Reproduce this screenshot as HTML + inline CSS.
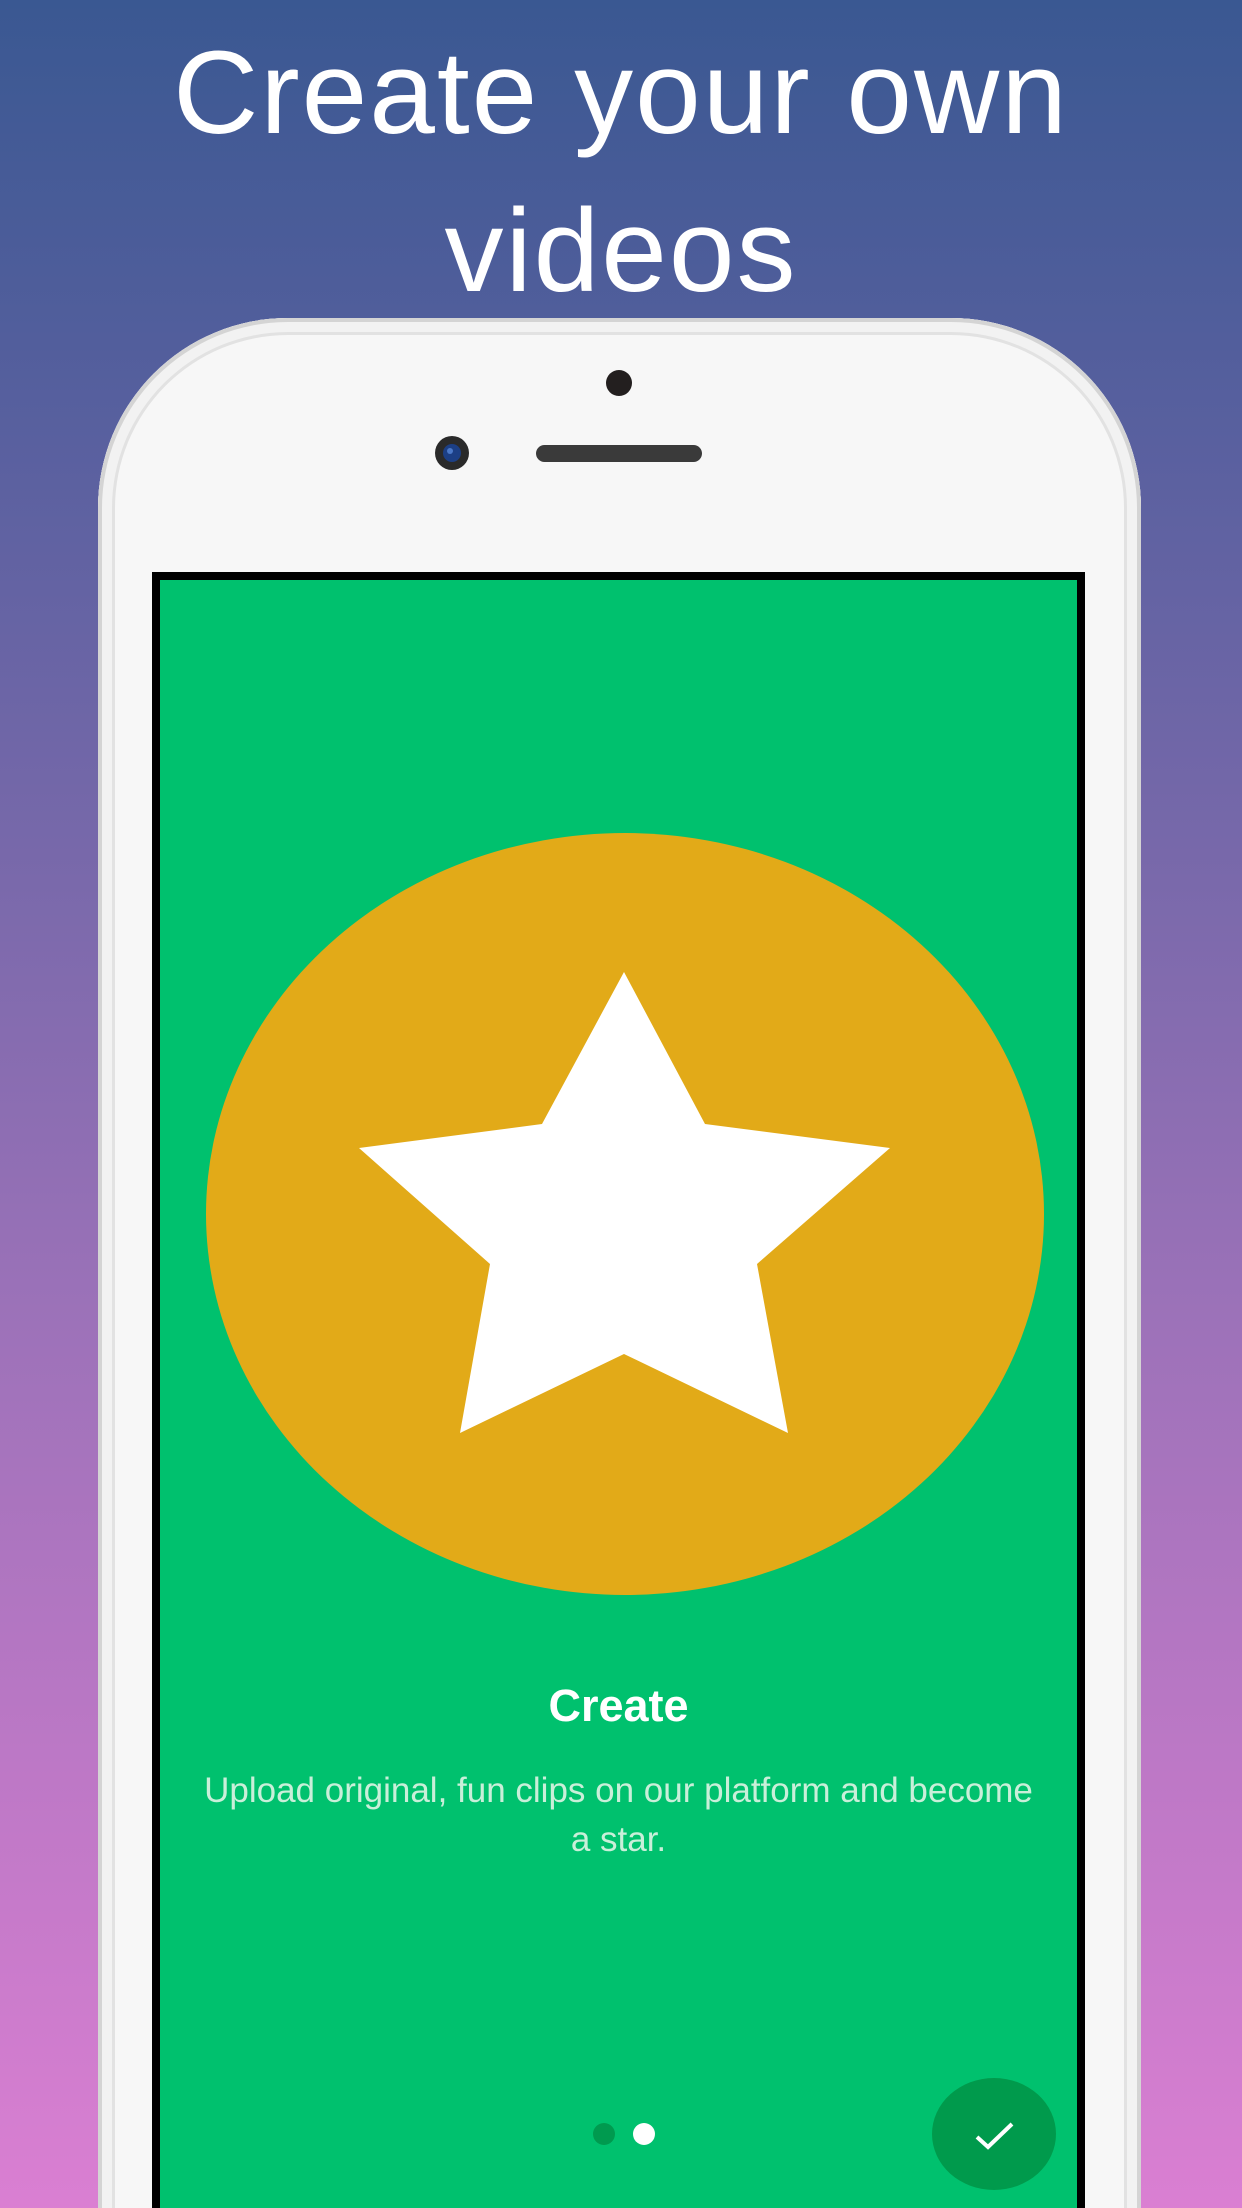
<!DOCTYPE html>
<html><head><meta charset="utf-8">
<style>
html,body{margin:0;padding:0;width:1242px;height:2208px;overflow:hidden}
#wrap{width:1242px;height:2208px;overflow:hidden;position:relative;
background:linear-gradient(180deg,#3a5892 0%,#59609f 20%,#7a69ab 40%,#9d72b9 60%,#bd78c6 80%,#da7fd2 100%);
font-family:"Liberation Sans",sans-serif}
.title{position:absolute;left:0;width:1242px;text-align:center;color:#fff;font-size:118px;font-weight:300;letter-spacing:2px;line-height:1}
.phone{position:absolute;left:98px;top:318px;width:1043px;height:2000px;border-radius:190px 190px 0 0;
background:#f7f7f7;box-shadow:inset 0 0 0 4px #d4d4d4, inset 0 0 0 14px #f2f2f2, inset 0 0 0 17px #e2e2e2}
.screen{position:absolute;left:152px;top:572px;width:917px;height:1628px;background:#00c16e;border:8px solid #000;border-bottom:none}
</style></head><body><div id="wrap">
<div class="title" style="top:34px">Create your own</div>
<div class="title" style="top:192px">videos</div>
<div class="phone"></div>
<div style="position:absolute;left:606px;top:370px;width:26px;height:26px;border-radius:50%;background:#231f1f"></div>
<svg style="position:absolute;left:434px;top:435px" width="36" height="36"><circle cx="18" cy="18" r="17" fill="#2a2a2a"/><circle cx="18" cy="18" r="9" fill="#1c3f85"/><circle cx="16" cy="16" r="3" fill="#4a78c8"/></svg>
<div style="position:absolute;left:536px;top:445px;width:166px;height:17px;border-radius:9px;background:#3a3a3a"></div>
<div class="screen"></div>
<svg style="position:absolute;left:0;top:0" width="1242" height="2208">
<ellipse cx="625" cy="1214" rx="419" ry="381" fill="#e2aa18"/>
<polygon fill="#fff" points="624,972 705,1124 890,1148 757,1264 788,1433 624,1354 460,1433 490,1264 359,1148 542,1124"/>
<circle cx="604" cy="2134" r="11" fill="#009a4f"/>
<circle cx="644" cy="2134" r="11" fill="#fff"/>
<ellipse cx="994" cy="2134" rx="62" ry="56" fill="#009a4c"/>
<polyline points="977,2137 988,2147 1012,2124" fill="none" stroke="#fff" stroke-width="4"/>
</svg>
<div style="position:absolute;left:160px;width:917px;top:1680px;text-align:center;color:#fff;font-weight:bold;font-size:45px">Create</div>
<div style="position:absolute;left:160px;width:917px;top:1766px;text-align:center;color:#c9efd9;font-size:35px;line-height:49px">Upload original, fun clips on our platform and become<br>a star.</div>
</div></body></html>
